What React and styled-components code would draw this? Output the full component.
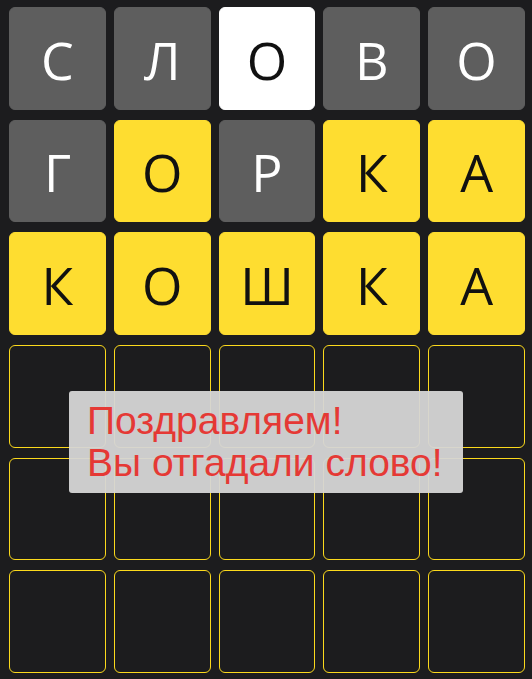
import React from 'react';
import styled, { createGlobalStyle } from 'styled-components';

const GlobalStyle = createGlobalStyle`
  html, body {
    margin: 0;
    padding: 0;
    background-color: #1c1c1e;
  }
`;

const Board = styled.div`
  position: relative;
  box-sizing: border-box;
  height: 100vh;
  padding: 7px 7px 6px 9px;
  display: grid;
  grid-template-columns: repeat(5, 1fr);
  grid-template-rows: repeat(6, 1fr);
  column-gap: 8px;
  row-gap: 10px;
  font-family: "Open Sans", "Noto Sans", sans-serif;
`;

const tileColors = {
  absent: { bg: '#5e5e5e', fg: '#ffffff', border: '#5e5e5e' },
  present: { bg: '#fedd30', fg: '#111111', border: '#fedd30' },
  current: { bg: '#ffffff', fg: '#111111', border: '#ffffff' },
  empty: { bg: 'transparent', fg: '#ffffff', border: '#fbd91c' },
};

const Tile = styled.div`
  box-sizing: border-box;
  display: flex;
  align-items: center;
  justify-content: center;
  border-radius: 6px;
  border: 1px solid ${({ $state }) => tileColors[$state].border};
  background-color: ${({ $state }) => tileColors[$state].bg};
  color: ${({ $state }) => tileColors[$state].fg};
  font-size: 52px;
  font-weight: 400;
  line-height: 1;
  padding-top: 3px;
`;

const Toast = styled.div`
  position: absolute;
  top: 391px;
  left: 50%;
  transform: translateX(-50%);
  box-sizing: border-box;
  width: 394px;
  height: 102px;
  padding: 9px 18px;
  border-radius: 3px;
  background-color: rgba(214, 214, 214, 0.95);
  color: #e53935;
  font-family: "Liberation Sans", Arial, sans-serif;
  font-size: 39px;
  line-height: 42px;
  white-space: nowrap;
`;

const rows = [
  [['С', 'absent'], ['Л', 'absent'], ['О', 'current'], ['В', 'absent'], ['О', 'absent']],
  [['Г', 'absent'], ['О', 'present'], ['Р', 'absent'], ['К', 'present'], ['А', 'present']],
  [['К', 'present'], ['О', 'present'], ['Ш', 'present'], ['К', 'present'], ['А', 'present']],
];

const cells = [];
for (let r = 0; r < 6; r++) {
  for (let c = 0; c < 5; c++) {
    const cell = rows[r] ? rows[r][c] : ['', 'empty'];
    cells.push(cell);
  }
}

const App = () => {
  return (
    <>
      <GlobalStyle />
      <Board>
        {cells.map(([letter, state], index) => (
          <Tile key={index} $state={state}>{letter}</Tile>
        ))}
        <Toast>
          Поздравляем!
          <br />
          Вы отгадали слово!
        </Toast>
      </Board>
    </>
  );
};

export default App;
